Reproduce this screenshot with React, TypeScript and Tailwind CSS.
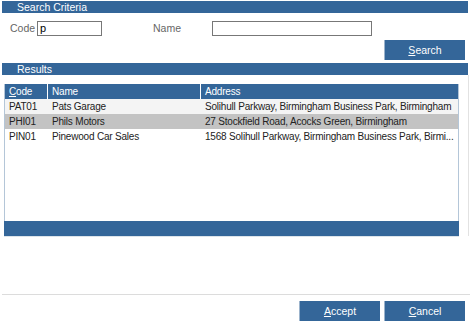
import React from "react";

const font = { fontFamily: '"Liberation Sans", Arial, sans-serif' };

function Btn({ first, rest, className = "" }: { first: string; rest: string; className?: string }) {
  return (
    <button
      className={`h-[20px] w-[81px] bg-[#346699] border-l border-[#9bb3cc] text-white text-[10.5px] leading-none flex items-center justify-center ${className}`}
    >
      <span className="underline underline-offset-1">{first}</span>
      <span>{rest}</span>
    </button>
  );
}

const rows = [
  { code: "PAT01", name: "Pats Garage", addr: "Solihull Parkway, Birmingham Business Park, Birmingham", bg: "bg-[#f4f4f4]" },
  { code: "PHI01", name: "Phils Motors", addr: "27 Stockfield Road, Acocks Green, Birmingham", bg: "bg-[#c3c3c3]" },
  { code: "PIN01", name: "Pinewood Car Sales", addr: "1568 Solihull Parkway, Birmingham Business Park, Birmi...", bg: "bg-white" },
];

export default function App() {
  return (
    <div className="w-[472px] h-[327px] bg-white flex flex-col text-[10px] leading-none" style={font}>
      {/* Search Criteria header */}
      <div className="mt-[1px] ml-[2px] w-[466px] h-[12px] bg-[#346699] text-white flex items-center pl-[15px] text-[10.5px]">
        Search Criteria
      </div>
      <div className="flex items-center mt-[8px] h-[15px] shrink-0">
        <span className="ml-[10px] w-[27px] text-[#666] text-[10.5px]">Code</span>
        <div className="w-[65px] h-[15px] border border-[#777] flex items-center pl-[2px] text-black text-[11px]">p</div>
        <span className="ml-[51px] w-[59px] text-[#666] text-[10.5px]">Name</span>
        <div className="w-[160px] h-[15px] border border-[#777]"></div>
      </div>
      <div className="flex justify-end mt-[4px] pr-[7px] shrink-0">
        <Btn first="S" rest="earch" />
      </div>
      {/* Results header */}
      <div className="mt-[3px] ml-[2px] w-[466px] h-[12px] shrink-0 bg-[#346699] text-white flex items-center pl-[15px] text-[10.5px]">
        Results
      </div>
      <div className="flex shrink-0">
        <div className="ml-[4px] w-[455px] h-[152px] mt-[9px] flex flex-col border-l border-r border-[#b4c6d8] tracking-[-0.2px]">
          <div className="flex h-[15px] shrink-0 bg-[#346699] text-white">
            <div className="w-[43px] pl-[4px] flex items-center border-r border-white">
              <span className="underline underline-offset-1">C</span>ode
            </div>
            <div className="w-[153px] pl-[4px] flex items-center border-r border-white">Name</div>
            <div className="flex-1 pl-[4px] flex items-center">Address</div>
          </div>
          {rows.map((r) => (
            <div key={r.code} className={`flex h-[15px] shrink-0 ${r.bg} text-[#222] whitespace-nowrap`}>
              <div className="w-[43px] pl-[4px] flex items-center">{r.code}</div>
              <div className="w-[153px] pl-[4px] flex items-center">{r.name}</div>
              <div className="flex-1 min-w-0 pl-[4px] flex items-center overflow-hidden">{r.addr}</div>
            </div>
          ))}
          <div className="flex-1"></div>
          <div className="h-[15px] shrink-0 bg-[#346699] -ml-[1px] -mr-[1px]"></div>
        </div>
        <div className="ml-[9px] w-[1px] bg-[#e2e2e2]"></div>
      </div>
      <div className="ml-[4px] w-[455px] h-[1px] shrink-0 bg-[#dde4ea]"></div>
      <div className="mt-[57px] ml-[2px] w-[468px] h-[1px] shrink-0 bg-[#dcdcdc]"></div>
      <div className="flex justify-end mt-[6px] pr-[7px] gap-[4px] shrink-0">
        <Btn first="A" rest="ccept" />
        <Btn first="C" rest="ancel" />
      </div>
    </div>
  );
}
